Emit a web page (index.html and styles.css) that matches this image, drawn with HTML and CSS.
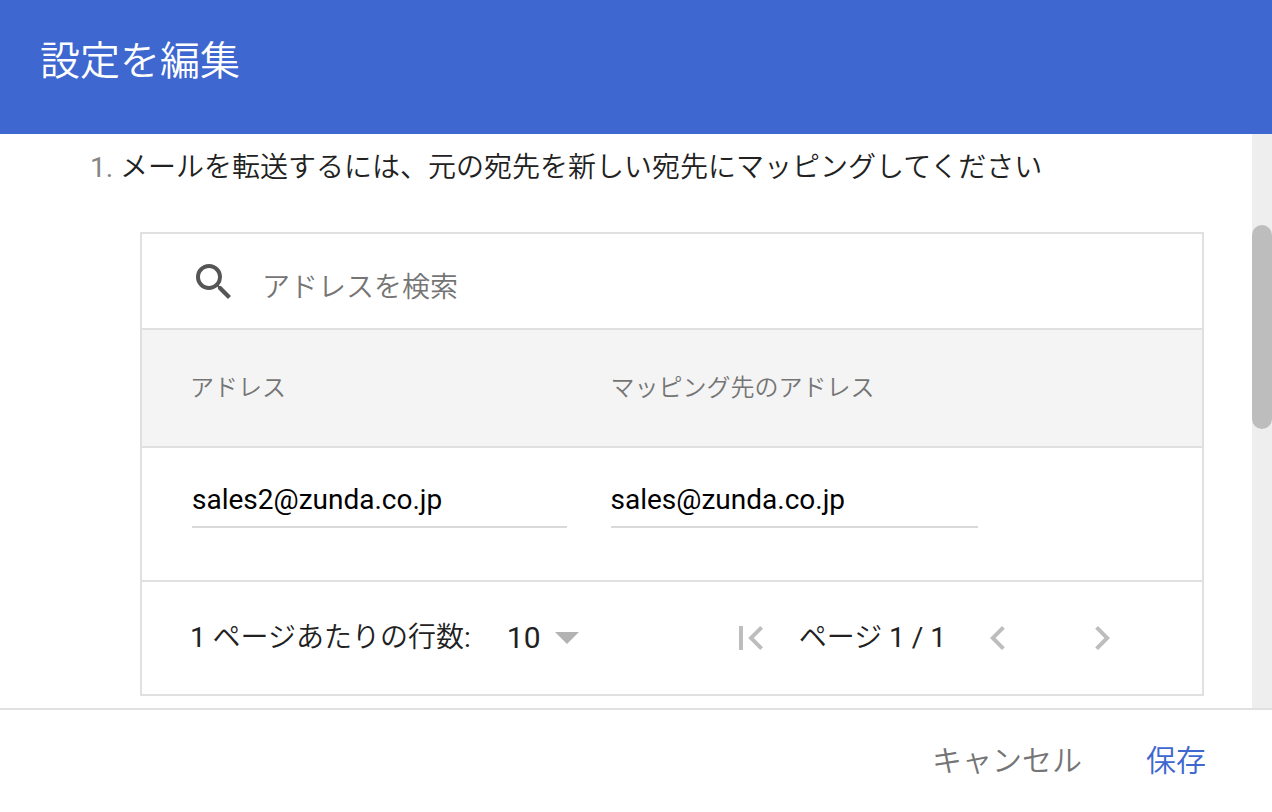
FILE: index.html
```html
<!DOCTYPE html>
<html lang="ja">
<head>
<meta charset="utf-8">
<meta name="viewport" content="width=device-width, initial-scale=1">
<title>設定を編集</title>
<link rel="stylesheet" href="styles.css">
</head>
<body>
<header class="dialog-header">
  <h1 class="dialog-title">設定を編集</h1>
</header>
<div class="dialog-body">
  <main class="content">
    <ol class="steps">
      <li class="step">メールを転送するには、元の宛先を新しい宛先にマッピングしてください</li>
    </ol>
    <section class="panel" aria-label="アドレスのマッピング">
      <div class="search">
        <svg class="search-icon" viewBox="0 0 24 24" aria-hidden="true"><path d="M15.5 14h-.79l-.28-.27A6.471 6.471 0 0 0 16 9.5 6.5 6.5 0 1 0 9.5 16c1.61 0 3.09-.59 4.23-1.57l.27.28v.79l5 4.99L20.49 19l-4.99-5zm-6 0C7.01 14 5 11.99 5 9.5S7.01 5 9.5 5 14 7.01 14 9.5 11.99 14 9.5 14z"/></svg>
        <input class="search-input" type="text" placeholder="アドレスを検索" aria-label="アドレスを検索">
      </div>
      <table class="mapping">
        <colgroup><col class="col-from"><col class="col-to"><col></colgroup>
        <thead>
          <tr>
            <th class="cell-from" id="from" scope="col">アドレス</th>
            <th id="to" scope="col">マッピング先のアドレス</th>
            <td></td>
          </tr>
        </thead>
        <tbody>
          <tr>
            <td class="cell-from"><input class="address" type="text" value="sales2@zunda.co.jp" aria-labelledby="from"></td>
            <td><input class="address" type="text" value="sales@zunda.co.jp" aria-labelledby="to"></td>
            <td></td>
          </tr>
        </tbody>
      </table>
      <div class="pager">
        <label class="rows-label" for="rows"><span class="number">1</span> ページあたりの行数<span class="number">:</span></label>
        <div class="rows">
          <select class="rows-select" id="rows"><option>10</option><option>20</option><option>50</option></select>
          <svg class="rows-arrow" viewBox="0 0 24 12" aria-hidden="true"><path d="M0 0h24L12 12z"/></svg>
        </div>
        <nav class="pages" aria-label="ページ">
          <button class="icon-button" type="button" aria-label="最初のページ"><svg class="icon" viewBox="0 0 48 48" aria-hidden="true"><path d="M12 12h4v24h-4zM36 14.800L26.800 24 36 33.200 33.200 36 21.200 24 33.200 12z"/></svg></button>
          <span class="page-label">ページ <span class="number">1 / 1</span></span>
          <button class="icon-button" type="button" aria-label="前のページ"><svg class="icon" viewBox="0 0 48 48" aria-hidden="true"><path d="M30.800 14.800L21.600 24l9.200 9.200L28 36 16 24l12-12z"/></svg></button>
          <button class="icon-button next" type="button" aria-label="次のページ"><svg class="icon" viewBox="0 0 48 48" aria-hidden="true"><path d="M17.200 33.200L26.400 24l-9.200-9.200L20 12l12 12-12 12z"/></svg></button>
        </nav>
      </div>
    </section>
  </main>
  <div class="scroll-track" aria-hidden="true"><div class="scroll-thumb"></div></div>
</div>
<footer class="dialog-actions">
  <button class="action" type="button">キャンセル</button>
  <button class="action action-primary" type="button">保存</button>
</footer>
</body>
</html>
```
FILE: styles.css
```css
* {
  box-sizing: border-box;
}

body {
  display: flex;
  flex-direction: column;
  min-height: 100vh;
  margin: 0;
  background: #fff;
  color: #212121;
  font: 350 28px/40px Roboto, "Noto Sans CJK JP", sans-serif;
}

button,
input,
select {
  margin: 0;
  padding: 0;
  border: 0;
  background: none;
  color: inherit;
  font: inherit;
}

.dialog-header {
  padding: 34px 40px 44px;
  background: #3e67d0;
  color: #fff;
}

.dialog-title {
  margin: 0;
  font-size: 40px;
  font-weight: 350;
  line-height: 56px;
}

.dialog-body {
  display: flex;
  flex: 1;
}

.content {
  flex: 1;
  min-width: 0;
  padding: 14px 48px 12px 120px;
}

.steps {
  margin: 0 0 44px;
  padding: 0;
}

.step::marker {
  color: #858585;
  font-weight: 400;
}

.panel {
  margin-left: 20px;
  border: 2px solid #e0e0e0;
}

.search {
  display: flex;
  gap: 24px;
  padding: 24px 48px 22px;
}

.search-icon {
  flex: none;
  width: 48px;
  height: 48px;
  fill: #555;
}

.search-input {
  flex: 1;
  min-width: 0;
  padding-top: 12px;
  outline: 0;
  line-height: 36px;
}

.search-input::placeholder {
  color: #757575;
  opacity: 1;
}

.mapping {
  width: 100%;
  border-collapse: separate;
  border-spacing: 0;
  table-layout: fixed;
}

.mapping th,
.mapping td {
  padding: 0;
  text-align: left;
  font-weight: 350;
}

.mapping thead th,
.mapping thead td {
  height: 120px;
  border: solid #e0e0e0;
  border-width: 2px 0;
  background: #f4f4f4;
  color: #757575;
  font-size: 24px;
}

.mapping thead .cell-from {
  padding-left: 48px;
}

.mapping tbody td {
  padding: 26px 0 52px;
}

.mapping tbody .cell-from {
  padding-left: 50px;
  padding-right: 44px;
}

.col-from {
  width: 44.2%;
}

.col-to {
  width: 34.7%;
}

.address {
  display: block;
  width: 100%;
  height: 54px;
  padding-bottom: 2px;
  border-bottom: 2px solid #d9d9d9;
  outline: 0;
  color: #000;
  font-weight: 400;
}

.pager {
  display: flex;
  align-items: center;
  height: 114px;
  padding: 0 76px 0 48px;
  border-top: 2px solid #e0e0e0;
}

.number {
  font-weight: 400;
}

.rows {
  position: relative;
  margin-left: 36px;
}

.rows-select {
  width: 72px;
  appearance: none;
  outline: 0;
  font-size: 30px;
  font-weight: 400;
}

.rows-arrow {
  position: absolute;
  top: 14px;
  right: 0;
  width: 24px;
  height: 12px;
  fill: #b3b3b3;
  pointer-events: none;
}

.pages {
  display: flex;
  align-items: center;
  margin-left: auto;
}

.page-label {
  margin: 0 28px 0 24px;
}

.icon-button {
  display: block;
  width: 48px;
  height: 48px;
}

.next {
  margin-left: 56px;
}

.icon {
  display: block;
  width: 48px;
  height: 48px;
  fill: #bdbdbd;
}

.scroll-track {
  width: 20px;
  padding-top: 91px;
  background: #eee;
}

.scroll-thumb {
  height: 204px;
  border-radius: 10px;
  background: #bdbdbd;
}

.dialog-actions {
  display: flex;
  justify-content: flex-end;
  gap: 64px;
  padding: 31px 66px 31px;
  border-top: 2px solid #e0e0e0;
}

.action {
  color: #757575;
  font-size: 30px;
  line-height: 40px;
}

.action-primary {
  color: #3e67d0;
}
```
